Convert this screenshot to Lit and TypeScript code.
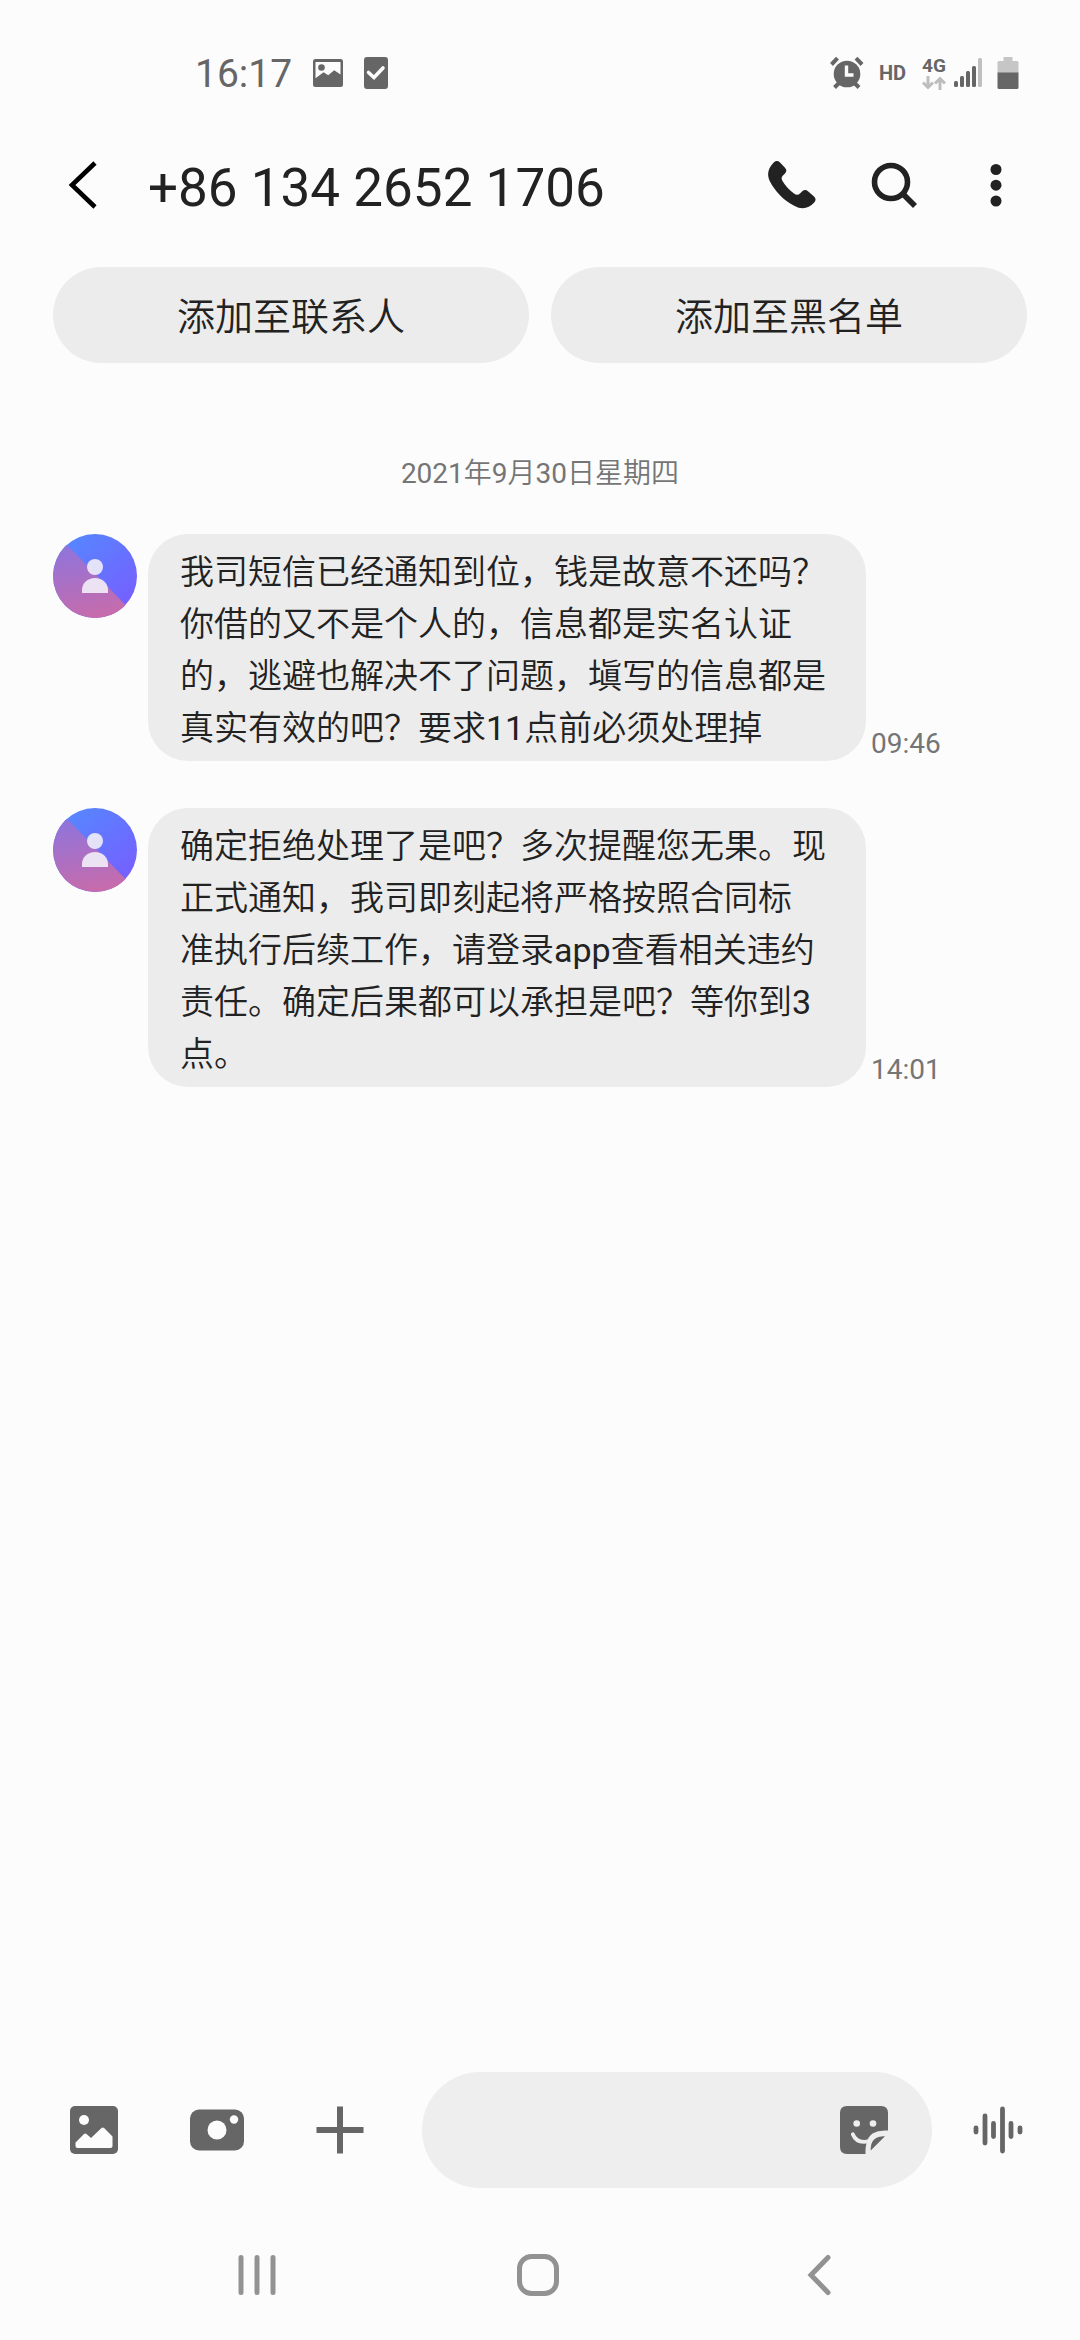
import { LitElement, html, css, svg } from "lit";
import { customElement, property } from "lit/decorators.js";

const chevron = svg`<path d="M36 3 L13 25 L36 47" fill="none" stroke="#000" stroke-width="4.6" stroke-linejoin="miter"/>`;

@customElement("status-bar")
class StatusBar extends LitElement {
  static styles = css`
    :host {
      display: flex;
      align-items: center;
      justify-content: space-between;
      height: 146px;
      padding: 0 61px 0 195px;
      box-sizing: border-box;
      color: #666;
      font-family: Roboto, "Noto Sans CJK SC", sans-serif;
    }
    .side { display: flex; align-items: center; }
    .left { gap: 20px; }
    .clock { padding-top: 2px; font-size: 39px; line-height: 48px; }
    .hd { font-size: 20px; font-weight: 700; line-height: 24px; margin-left: 15px; }
    .net { display: flex; flex-direction: column; align-items: center; margin: 0 8px 0 16px; }
    .gen { font-size: 19px; font-weight: 700; line-height: 20px; }
    .battery { margin-left: 14px; }
    svg { display: block; }
  `;
  render() {
    return html`
      <div class="side left">
        <span class="clock">16:17</span>
        <svg width="32" height="32" viewBox="0 0 32 32">
          <rect x="1" y="2" width="30" height="28" rx="2.5" fill="#666" />
          <path d="M3.5 5h25v12.5l-6.300-4.200-6 5-4.600-3-8.100 6z" fill="#fcfcfc" />
          <circle cx="9.500" cy="10.500" r="3.300" fill="#666" />
        </svg>
        <svg width="24" height="32" viewBox="0 0 24 32">
          <rect width="24" height="32" rx="3" fill="#666" />
          <path d="M4.500 15.500l5.500 5 9-9.500" fill="none" stroke="#fcfcfc" stroke-width="3.600" stroke-linecap="round" />
        </svg>
      </div>
      <div class="side">
        <svg width="34" height="34" viewBox="0 0 34 34">
          <g fill="none" stroke="#666" stroke-width="4">
            <path d="M1.500 8.500l6-6.300M32 8.500l-6-6.300M4.500 31.500l6-6M29 31.500l-6-6" />
          </g>
          <circle cx="17" cy="18" r="13.300" fill="#666" />
          <path d="M16.500 9.500v9.500h7" fill="none" stroke="#fcfcfc" stroke-width="3.400" />
        </svg>
        <span class="hd">HD</span>
        <span class="net">
          <span class="gen">4G</span>
          <svg width="24" height="14" viewBox="0 0 24 14">
            <g fill="none" stroke="#bdbdbd" stroke-width="3">
              <path d="M6 0v11M1 6.500l5 5 5-5M18 14V3M13 7.500l5-5 5 5" />
            </g>
          </svg>
        </span>
        <svg width="29" height="30" viewBox="0 0 29 30">
          <g fill="#666">
            <rect x="0" y="23" width="4" height="6" rx="1.500" />
            <rect x="6" y="18" width="4" height="11" rx="1.500" />
            <rect x="12" y="13" width="4" height="16" rx="1.500" />
            <rect x="18" y="8" width="4" height="21" rx="1.500" />
          </g>
          <rect x="24" y="0" width="4" height="29" rx="1.500" fill="#c0c0c0" />
        </svg>
        <svg class="battery" width="22" height="34" viewBox="0 0 22 34">
          <path d="M6.500 1h9v4h4.500a1.500 1.500 0 0 1 1.500 1.500V17H.5V6.500A1.500 1.500 0 0 1 2 5h4.500z" fill="#c6c6c6" />
          <path d="M.5 16.500h21v15a1.500 1.500 0 0 1-1.500 1.500H2a1.500 1.500 0 0 1-1.500-1.500z" fill="#666" />
        </svg>
      </div>
    `;
  }
}

// Wraps runs of Latin letters and digits so they keep the regular weight beside the lighter CJK text.
const mixed = (text: string) =>
  text.split(/([0-9A-Za-z]+)/).map((part, i) => (i % 2 ? html`<span class="latin">${part}</span>` : part));

@customElement("chat-message")
class ChatMessage extends LitElement {
  @property({ attribute: false }) lines: string[] = [];
  @property() time = "";

  static styles = css`
    :host {
      display: grid;
      grid-template-columns: 84px minmax(0, 718px) auto;
      justify-content: start;
      column-gap: 11px;
      font-family: Roboto, "Noto Sans CJK SC DemiLight", "Noto Sans CJK SC", sans-serif;
    }
    .avatar { display: block; width: 84px; height: 84px; }
    .bubble {
      margin: 0;
      padding: 12px 32px 7px;
      border-radius: 40px;
      background: #ececec;
      color: #222;
      font-size: 34px;
      font-weight: 350;
      line-height: 52px;
    }
    .latin { font-weight: 400; }
    .time {
      align-self: end;
      margin-left: -6px;
      color: #757575;
      font-size: 28px;
      line-height: 34px;
    }
  `;
  render() {
    return html`
      <svg class="avatar" viewBox="0 0 84 84" role="img" aria-label="联系人">
        <defs>
          <linearGradient id="sky" x1="0.200" y1="0" x2="0.900" y2="0.800">
            <stop offset="0" stop-color="#5588ff" />
            <stop offset="1" stop-color="#7560ff" />
          </linearGradient>
          <linearGradient id="dusk" x1="0.300" y1="0" x2="0.500" y2="1">
            <stop offset="0" stop-color="#8f74dc" />
            <stop offset="1" stop-color="#c76bab" />
          </linearGradient>
        </defs>
        <circle cx="42" cy="42" r="42" fill="url(#sky)" />
        <path d="M14 10.700 A42 42 0 1 0 72.500 70.900 Z" fill="url(#dusk)" />
        <g fill="#f2eef8" fill-opacity=".9">
          <circle cx="42" cy="33" r="8" />
          <path d="M29 59v-3c0-7 5.500-12 13-12s13 5 13 12v3z" />
        </g>
      </svg>
      <p class="bubble">${this.lines.map((l, i) => (i ? html`<br />${mixed(l)}` : mixed(l)))}</p>
      <time class="time">${this.time}</time>
    `;
  }
}

const messages = [
  {
    time: "09:46",
    lines: ["我司短信已经通知到位，钱是故意不还吗？", "你借的又不是个人的，信息都是实名认证", "的，逃避也解决不了问题，塡写的信息都是", "真实有效的吧？要求11点前必须处理掉"],
  },
  {
    time: "14:01",
    lines: ["确定拒绝处理了是吧？多次提醒您无果。现", "正式通知，我司即刻起将严格按照合同标", "准执行后续工作，请登录app查看相关违约", "责任。确定后果都可以承担是吧？等你到3", "点。"],
  },
];

@customElement("app-root")
class AppRoot extends LitElement {
  static styles = css`
    :host {
      display: flex;
      flex-direction: column;
      min-height: 100vh;
      background: #fcfcfc;
      color: #222;
      font-family: Roboto, "Noto Sans CJK SC DemiLight", "Noto Sans CJK SC", sans-serif;
    }
    button {
      border: 0;
      padding: 0;
      background: none;
      color: inherit;
      font: inherit;
      cursor: pointer;
    }
    svg { display: block; }
    .icon {
      display: flex;
      flex: none;
      align-items: center;
      justify-content: center;
      width: 72px;
      height: 72px;
    }
    .header {
      display: flex;
      align-items: center;
      padding: 3px 48px 46px;
    }
    .title {
      flex: 1;
      margin: 0 0 0 28px;
      padding-top: 6px;
      font-size: 53px;
      font-weight: 400;
      line-height: 64px;
      white-space: nowrap;
    }
    .tools { display: flex; gap: 30px; }
    .quick {
      display: grid;
      grid-template-columns: 1fr 1fr;
      gap: 22px;
      padding: 0 53px;
    }
    .pill {
      height: 96px;
      padding-top: 4px;
      border-radius: 48px;
      background: #ececec;
      font-size: 38px;
      font-weight: 350;
      line-height: 52px;
    }
    .thread {
      display: flex;
      flex: 1;
      flex-direction: column;
      gap: 47px;
      padding: 97px 53px 0;
    }
    .date {
      margin: 0;
      color: #757575;
      font-size: 28px;
      font-weight: 350;
      line-height: 27px;
      text-align: center;
    }
    .latin { font-weight: 400; }
    .composer {
      display: flex;
      align-items: center;
      padding: 0 46px 22px 58px;
    }
    .attach { display: flex; gap: 51px; margin-right: 46px; }
    .field {
      display: flex;
      flex: 1;
      align-items: center;
      min-width: 0;
      height: 116px;
      margin-right: 30px;
      padding: 0 32px 0 48px;
      box-sizing: border-box;
      border-radius: 58px;
      background: #eee;
    }
    .entry {
      flex: 1;
      min-width: 0;
      border: 0;
      outline: 0;
      background: none;
      color: inherit;
      font: inherit;
      font-size: 34px;
    }
    .nav {
      display: grid;
      grid-template-columns: repeat(3, 1fr);
      justify-items: center;
      align-items: center;
      height: 130px;
      padding: 0 120px 0 116px;
    }
  `;
  render() {
    return html`
      <status-bar></status-bar>
      <header class="header">
        <button class="icon" aria-label="返回"><svg width="50" height="50" viewBox="0 0 50 50">${chevron}</svg></button>
        <h1 class="title">+86 134 2652 1706</h1>
        <div class="tools">
          <button class="icon" aria-label="呼叫">
            <svg width="50" height="50" viewBox="0 0 50 50">
              <path d="M6.500 2.800C8.500.6 11 .6 13 2.500l5 5.200c1.800 2 1.700 3.800.2 5.500l-2.500 2.600c-1.500 1.700-1.300 3.400-.2 5.200 3 5 6.500 8.800 11.500 12.500 2.300 1.700 4.400 1.600 6 0l2.500-2.400c1.700-1.500 3.600-1.500 5.500.1l6 5.200c2 2 2.100 4 .2 6.200-5.700 6.400-12.700 7.400-20 3.200C16.500 40.500 7.500 30.500 3 21.500-.5 14.500 1 8.500 6.500 2.800z" fill="#222" />
            </svg>
          </button>
          <button class="icon" aria-label="搜索">
            <svg width="50" height="50" viewBox="0 0 50 50">
              <circle cx="22" cy="22" r="16.500" fill="none" stroke="#222" stroke-width="5.600" />
              <path d="M33.500 33.500L46 46" stroke="#222" stroke-width="5.600" />
            </svg>
          </button>
          <button class="icon" aria-label="更多选项">
            <svg width="50" height="50" viewBox="0 0 50 50" fill="#222">
              <circle cx="25" cy="9.500" r="5.500" /><circle cx="25" cy="25.200" r="5.500" /><circle cx="25" cy="41" r="5.500" />
            </svg>
          </button>
        </div>
      </header>
      <div class="quick">
        <button class="pill">添加至联系人</button>
        <button class="pill">添加至黑名单</button>
      </div>
      <main class="thread">
        <p class="date">${mixed("2021年9月30日星期四")}</p>
        ${messages.map((m) => html`<chat-message .lines=${m.lines} .time=${m.time}></chat-message>`)}
      </main>
      <div class="composer">
        <div class="attach">
          <button class="icon" aria-label="图片">
            <svg width="48" height="48" viewBox="0 0 48 48">
              <rect width="48" height="48" rx="5" fill="#666" />
              <circle cx="14" cy="14" r="5" fill="#fcfcfc" />
              <path d="M5.500 36.500L14 28q1.300-1 2.500 0l4.500 4 10.500-10q1.300-1.200 2.600 0l8.400 8.500V40q0 2-2 2h-33q-2 0-2-2z" fill="#fcfcfc" />
            </svg>
          </button>
          <button class="icon" aria-label="相机">
            <svg width="56" height="48" viewBox="0 0 56 48">
              <rect x="1" y="3.500" width="54" height="41" rx="9" fill="#666" />
              <circle cx="28" cy="24" r="9.500" fill="#fcfcfc" />
              <circle cx="45" cy="13.500" r="4.200" fill="#fcfcfc" />
            </svg>
          </button>
          <button class="icon" aria-label="添加">
            <svg width="48" height="48" viewBox="0 0 48 48"><path d="M24 .5v47M.5 24h47" stroke="#666" stroke-width="6" /></svg>
          </button>
        </div>
        <div class="field">
          <input class="entry" type="text" aria-label="输入信息" />
          <button class="icon" aria-label="表情贴图">
            <svg width="50" height="50" viewBox="0 0 50 50">
              <path d="M8 1h34q7 0 7 7v17.500C34 25.500 26.500 29 26.500 49H8q-7 0-7-7V8q0-7 7-7z" fill="#666" />
              <path d="M46 31.200L31.700 45.500c.1-5.500.8-8.500 3.500-11 2.500-2.400 5.500-3.100 10.800-3.300z" fill="#666" />
              <circle cx="17.700" cy="18.500" r="3.300" fill="#eee" /><circle cx="34" cy="18.500" r="3.300" fill="#eee" />
              <path d="M13.800 29.200c2.400 6 8 8.800 16 7" fill="none" stroke="#eee" stroke-width="3.800" stroke-linecap="round" />
            </svg>
          </button>
        </div>
        <button class="icon" aria-label="语音">
          <svg width="50" height="48" viewBox="0 0 50 48">
            <path d="M3 22v4M12 10v27M20.500 17.500v13M29.500 3v42M38 17.500v13M47 22v4" stroke="#666" stroke-width="4.800" stroke-linecap="round" />
          </svg>
        </button>
      </div>
      <nav class="nav">
        <button class="icon" aria-label="最近使用">
          <svg width="42" height="42" viewBox="0 0 42 42"><path d="M5 3.500v35M21 3.500v35M37 3.500v35" stroke="#929292" stroke-width="5" stroke-linecap="round" /></svg>
        </button>
        <button class="icon" aria-label="主屏幕">
          <svg width="42" height="42" viewBox="0 0 42 42"><rect x="2.500" y="2.500" width="37" height="37" rx="12" fill="none" stroke="#929292" stroke-width="5" /></svg>
        </button>
        <button class="icon" aria-label="返回上一页">
          <svg width="42" height="42" viewBox="0 0 42 42"><path d="M30 3.500L13 21l17 17.500" fill="none" stroke="#929292" stroke-width="5" stroke-linecap="round" /></svg>
        </button>
      </nav>
    `;
  }
}
